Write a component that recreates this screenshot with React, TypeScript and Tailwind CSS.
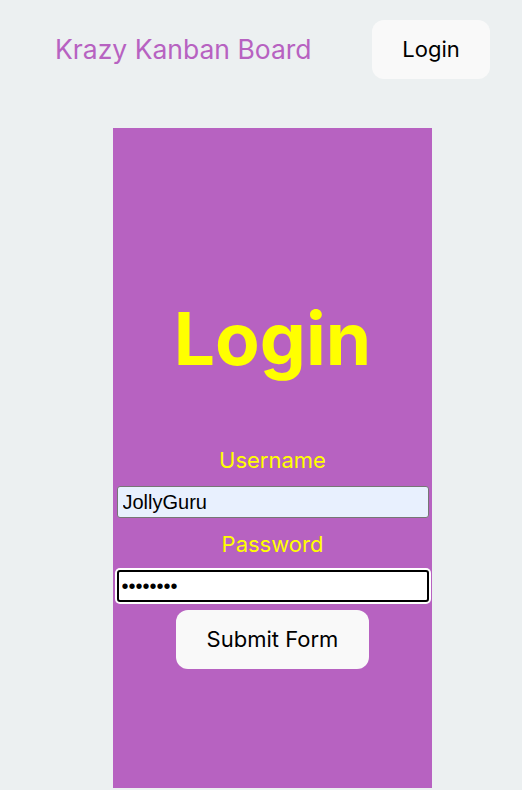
import React, { useState } from 'react';

export default function App() {
  const [username, setUsername] = useState('JollyGuru');
  const [password, setPassword] = useState('password');

  return (
    <div className="min-h-[790px] bg-[#ecf0f1] font-['Inter',sans-serif]">
      <header className="flex items-center justify-between pl-[55px] pr-[32px] pt-[20px]">
        <h1 className="text-[26.5px] leading-none text-[#b762c1]">Krazy Kanban Board</h1>
        <button className="flex h-[59px] w-[118px] items-center justify-center rounded-[12px] bg-[#f9f9f9] text-[22px] text-black">
          Login
        </button>
      </header>

      <main className="ml-[113px] mt-[49px] flex h-[660px] w-[319px] flex-col items-center bg-[#b762c1] pt-[174px]">
        <h2 className="text-[73px] font-bold leading-none text-[#ffff00]">Login</h2>

        <form className="mt-[71px] flex w-full flex-col items-center" onSubmit={(e) => e.preventDefault()}>
          <label htmlFor="username" className="text-[22px] leading-[28px] text-[#ffff00]">Username</label>
          <input
            id="username"
            type="text"
            value={username}
            onChange={(e) => setUsername(e.target.value)}
            className="mt-[12px] h-[32px] w-[312px] rounded-[3px] border border-[#767676] bg-[#e8f0fe] px-[5px] font-['Liberation_Sans',Arial,sans-serif] text-[20px] text-black outline-none"
          />
          <label htmlFor="password" className="mt-[12px] text-[22px] leading-[28px] text-[#ffff00]">Password</label>
          <input
            id="password"
            type="password"
            value={password}
            onChange={(e) => setPassword(e.target.value)}
            className="mt-[12px] h-[32px] w-[312px] rounded-[3px] border-2 border-black bg-white px-[3px] font-['Liberation_Sans',Arial,sans-serif] text-[20px] text-black shadow-[0_0_0_2px_#ffffff] outline-none"
          />
          <button
            type="submit"
            className="mt-[8px] flex h-[59px] w-[193px] items-center justify-center rounded-[12px] bg-[#f9f9f9] text-[22px] text-black"
          >
            Submit Form
          </button>
        </form>
      </main>
    </div>
  );
}
